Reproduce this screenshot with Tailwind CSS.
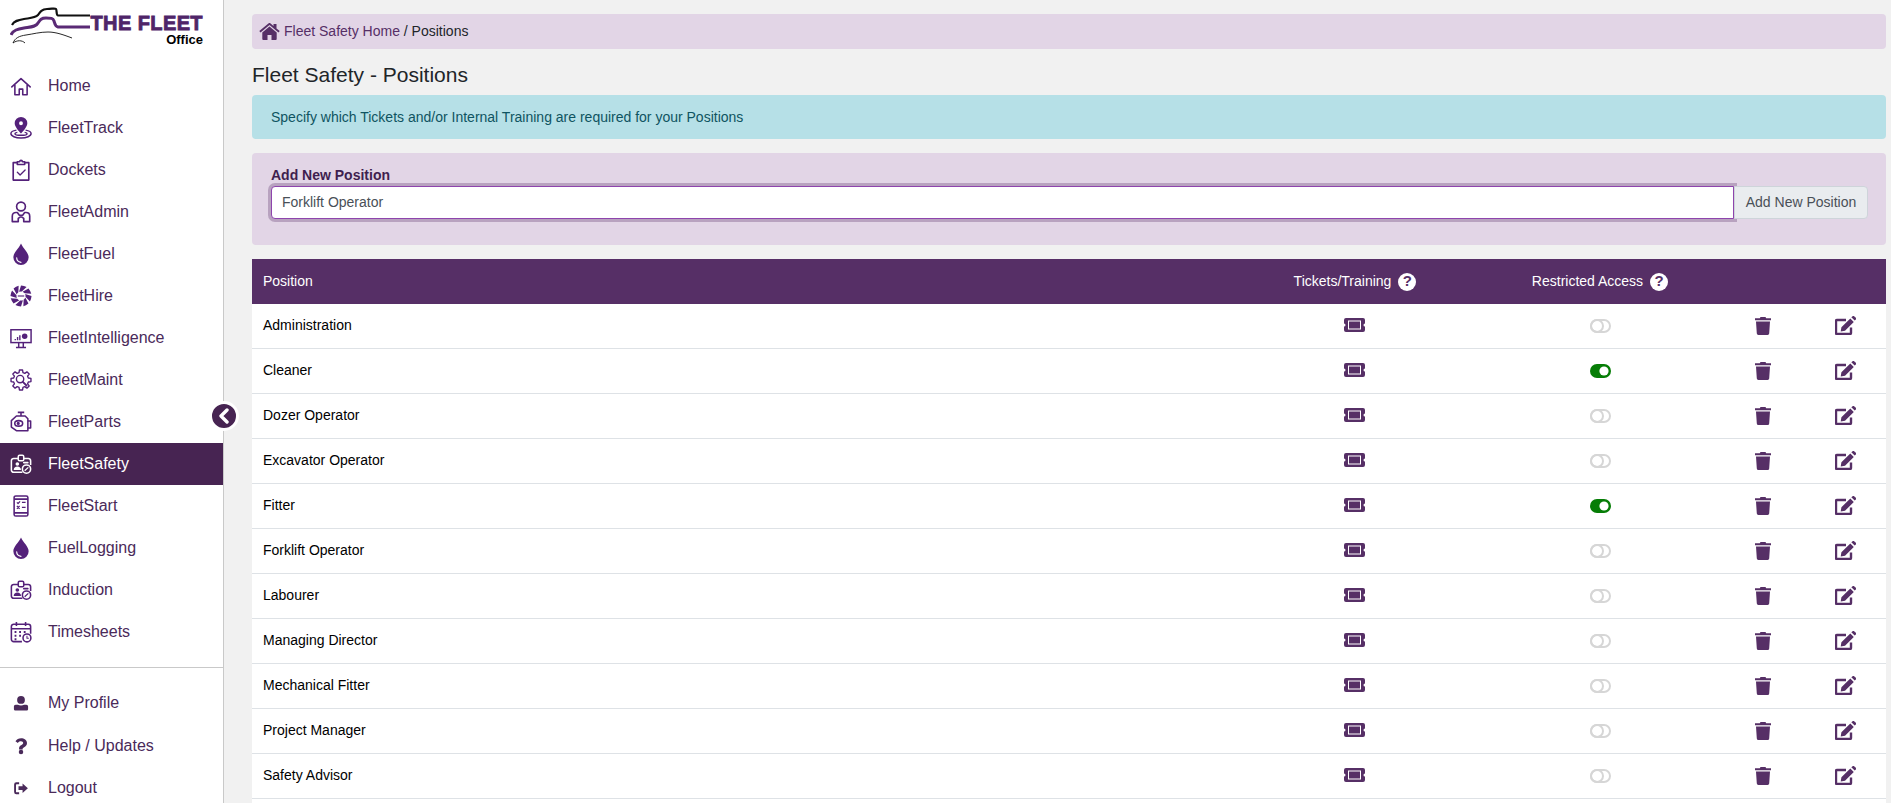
<!DOCTYPE html>
<html lang="en">
<head>
  <meta charset="UTF-8" />
  <title>Fleet Safety - Positions</title>
  <script src="https://cdn.jsdelivr.net/npm/@tailwindcss/browser@4"></script>
</head>
<body class="bg-[#f1f1f1] text-[14px] text-[#212529] font-['Liberation_Sans',Arial,sans-serif] h-screen overflow-hidden">

  <!-- icons -->
  <svg class="hidden">
    <symbol id="i-home" viewBox="0 0 24 24" fill="none" stroke="currentColor" stroke-width="1.800" stroke-linejoin="round" stroke-linecap="round"><path d="M1.500 12.500 12 3l10.500 9.500M5 10.500V21.500h5v-6.500h4v6.500h5V10.500"/></symbol>
    <symbol id="i-track" viewBox="0 0 24 24"><path fill="currentColor" fill-rule="evenodd" d="M12 0a6.900 6.900 0 0 0-6.900 6.900C5.100 11.500 12 18 12 18s6.900-6.500 6.900-11.100A6.900 6.900 0 0 0 12 0zm0 4.700a2.100 2.100 0 1 1 0 4.200 2.100 2.100 0 0 1 0-4.200z"/><g fill="none" stroke="currentColor" stroke-width="1.600"><path d="M7 14.300C3.200 15 1 16.400 1 18c0 2.800 4.900 5 11 5s11-2.200 11-5c0-1.600-2.200-3-6-3.700"/><path d="M8 16.800c-1.600.3-2.600.8-2.600 1.400 0 1 3 1.800 6.600 1.800s6.600-.8 6.600-1.800c0-.6-1-1.100-2.600-1.400"/></g></symbol>
    <symbol id="i-dockets" viewBox="0 0 24 24" fill="none" stroke="currentColor" stroke-width="1.800" stroke-linejoin="round" stroke-linecap="round"><path d="M8 4H3.500v19h17V4H16"/><path d="M8 6V3h2.500a1.500 1.500 0 0 1 3 0H16v3z"/><path d="m8 14.500 3 3 5.500-5.500" stroke-width="1.400"/></symbol>
    <symbol id="i-admin" viewBox="0 0 24 24" fill="none" stroke="currentColor" stroke-width="1.800" stroke-linejoin="round"><circle cx="12" cy="6" r="4.800"/><path d="M8 12.500H6.500C4.300 12.500 2.500 14 2.500 16.500v6h6.500v-3.500l2-1.500h2l2 1.500v3.500h6.500v-6c0-2.500-1.800-4-4-4H16l-2.200 3h-3.600z"/></symbol>
    <symbol id="i-fuel" viewBox="3.500 1 17 23"><path fill="currentColor" d="M12 1.500C9.500 7 4 11 4 16a8 8 0 0 0 16 0c0-5-5.500-9-8-14.500z"/><path fill="none" stroke="#fff" stroke-width="1.200" stroke-linecap="round" d="M7.500 16.500c0 2.500 2 4.500 4.500 4.700"/></symbol>
    <symbol id="i-hire" viewBox="0 0 24 24"><g fill="currentColor">
      <path id="blade" d="M12 .5Q15.500.8 18.100 2.250L12.870 7.080Q11.300 6.900 9.900 7.470z"/>
      <use href="#blade" transform="rotate(45 12 12)"/><use href="#blade" transform="rotate(90 12 12)"/><use href="#blade" transform="rotate(135 12 12)"/><use href="#blade" transform="rotate(180 12 12)"/><use href="#blade" transform="rotate(225 12 12)"/><use href="#blade" transform="rotate(270 12 12)"/><use href="#blade" transform="rotate(315 12 12)"/>
      <rect x="8.500" y="11" width="7" height="2" opacity=".6"/></g></symbol>
    <symbol id="i-intel" viewBox="0 0 24 24"><rect x="1" y="3" width="22" height="14" fill="none" stroke="currentColor" stroke-width="1.600"/><path fill="currentColor" d="M5 13h1.500v1.500H5zM7.500 11H9v3.500H7.500zM10 9h1.500v5.500H10z"/><circle cx="16" cy="10" r="3" fill="currentColor"/><path fill="none" stroke="currentColor" stroke-width="1.600" d="M9.500 17v5M14.500 17v5M6.500 22.300h11"/></symbol>
    <symbol id="i-maint" viewBox="0 0 24 24" fill="none" stroke="currentColor" stroke-width="1.500" stroke-linejoin="round"><polygon transform="translate(12 12)" points="8.020,-2.150 10.860,-1.720 10.860,1.720 8.020,2.150 7.190,4.150 8.900,6.460 6.460,8.900 4.150,7.190 2.150,8.020 1.720,10.860 -1.720,10.860 -2.150,8.020 -4.150,7.190 -6.460,8.900 -8.900,6.460 -7.190,4.150 -8.020,2.150 -10.860,1.720 -10.860,-1.720 -8.020,-2.150 -7.190,-4.150 -8.900,-6.460 -6.460,-8.900 -4.150,-7.190 -2.150,-8.020 -1.720,-10.860 1.720,-10.860 2.150,-8.020 4.150,-7.190 6.460,-8.900 8.900,-6.460 7.190,-4.150"/><circle cx="11" cy="11" r="4"/><path stroke-width="2" stroke-linecap="round" d="m14 14 4 4"/></symbol>
    <symbol id="i-parts" viewBox="0 0 24 24" fill="none" stroke="currentColor" stroke-width="1.700" stroke-linejoin="round"><path d="M8.500 1.500h7M12 1.500v4"/><path d="M7 5.500h9.500l3 3v13H7L1.500 17.500V10.500z"/><ellipse cx="9.500" cy="13.500" rx="4.300" ry="3"/><circle cx="9" cy="13.500" r=".9" fill="currentColor"/><path d="M19.500 11h3v7.500h-3"/></symbol>
    <symbol id="i-badge" viewBox="0 0 24 24" fill="none" stroke="currentColor" stroke-width="1.700" stroke-linejoin="round"><path d="M9 6H4a2.500 2.500 0 0 0-2.500 2.500v10A2.500 2.500 0 0 0 4 21h9.500M22.500 13V8.500A2.500 2.500 0 0 0 20 6h-5"/><rect x="9" y="2.500" width="6" height="6" rx="1.500"/><circle cx="8" cy="12" r="2" fill="currentColor" stroke="none"/><path fill="currentColor" stroke="none" d="M4 18.500c0-2.500 1.700-3.800 4-3.800s4 1.300 4 3.800z"/><path stroke-linecap="round" d="M15 10.500h4.500"/><circle cx="18" cy="17.500" r="4.500"/><path stroke-width="1.400" d="m16 19.300 4-3.600"/></symbol>
    <symbol id="i-start" viewBox="0 0 24 24" fill="none" stroke="currentColor" stroke-width="1.700" stroke-linejoin="round"><rect x="4.500" y="1" width="15" height="22" rx="1.800"/><path d="M4.500 4.500h15M4.500 19.500h15"/><path stroke-width="1.300" d="m7.500 8 1.300 1.300L11 7M13 8h4M7.500 12l3 3M10.500 12l-3 3M13 13.500h4"/></symbol>
    <symbol id="i-time" viewBox="0 0 24 24" fill="none" stroke="currentColor" stroke-width="1.700" stroke-linejoin="round"><path d="M13 22.500H4A2.500 2.500 0 0 1 1.500 20V6A2.500 2.500 0 0 1 4 3.500h16A2.500 2.500 0 0 1 22.500 6v8"/><path d="M1.500 8.500h21M7 1v4.500M17 1v4.500"/><path stroke-width="2.200" d="M5 12h2M10 12h2M15 12h2M5 16h2M10 16h2M5 20h2"/><circle cx="18.500" cy="18.500" r="4.300" fill="#fff"/><path stroke-width="1.100" d="M18.500 16v2.700h2"/></symbol>
    <symbol id="i-user" viewBox="0 0 24 24"><circle cx="12" cy="7" r="5.500" fill="currentColor"/><path fill="currentColor" d="M4.500 13.800h3c1.300.7 2.900 1 4.500 1s3.200-.3 4.500-1h3c1.400 0 2.500 1.100 2.500 2.500V20a2 2 0 0 1-2 2H4a2 2 0 0 1-2-2v-3.700c0-1.400 1.100-2.500 2.500-2.500z"/></symbol>
    <symbol id="i-help" viewBox="0 0 24 24"><path fill="currentColor" d="M12.300 1.500c-3.600 0-5.900 1.500-7.700 4.100l3.200 2.400c1-1.300 2-2.200 4.200-2.200 1.700 0 2.900 1 2.900 2.300 0 1.200-.8 1.900-2.200 2.700-1.800 1-3.300 2.300-3.300 4.700v1h4.800v-.6c0-1.100.6-1.600 2-2.400 2.200-1.200 3.800-2.700 3.800-5.600 0-3.800-3.800-6.400-7.900-6.400z"/><circle cx="12" cy="20" r="3" fill="currentColor"/></symbol>
    <symbol id="i-logout" viewBox="0 0 24 24"><path fill="currentColor" d="M9 5H5a1 1 0 0 0-1 1v11a1 1 0 0 0 1 1h4v3H4.500A3.500 3.500 0 0 1 1 17.500v-12A3.500 3.500 0 0 1 4.500 2H9zM14.500 4l8.500 7.500-8.500 7.500v-4.500H8v-6h6.500z"/></symbol>
    <symbol id="i-ticket" viewBox="0 0 21 14"><path fill="currentColor" fill-rule="evenodd" d="M2 0h17a2 2 0 0 1 2 2v3.500a1.500 1.500 0 0 0 0 3V12a2 2 0 0 1-2 2H2a2 2 0 0 1-2-2V8.500a1.500 1.500 0 0 0 0-3V2a2 2 0 0 1 2-2z"/><rect x="4.500" y="3" width="12" height="8" fill="none" stroke="#fff" stroke-width="1"/></symbol>
    <symbol id="i-off" viewBox="0 0 21 14" fill="none" stroke="#d6d6d6" stroke-width="2"><rect x="1" y="1" width="19" height="12" rx="6"/><circle cx="7" cy="7" r="6"/></symbol>
    <symbol id="i-on" viewBox="0 0 21 14"><rect width="21" height="14" rx="7" fill="#067d06"/><circle cx="14" cy="7" r="4.600" fill="#fff"/></symbol>
    <symbol id="i-trash" viewBox="0 0 16 18"><path fill="currentColor" d="M5.500 0h5l.7 1.300H16v2H0v-2h4.800zM1 4.500h14l-.8 12a1.600 1.600 0 0 1-1.600 1.500H3.400a1.600 1.600 0 0 1-1.600-1.500z"/></symbol>
    <symbol id="i-edit" viewBox="0 0 21 19"><path fill="none" stroke="currentColor" stroke-width="2.400" d="M16 11.500V17a1 1 0 0 1-1 1H2a1 1 0 0 1-1-1V5a1 1 0 0 1 1-1h9"/><path fill="currentColor" d="M15.300 2.500l3.500 3.500L10 14.800l-4.300.7.700-4.200zM16.300 1.300 17.300.4a1.500 1.500 0 0 1 2.100 0l1.200 1.200a1.500 1.500 0 0 1 0 2.100l-.9.900z"/></symbol>
  </svg>

  <div class="flex h-full">
    <!-- Sidebar -->
    <aside class="relative w-[224px] shrink-0 h-full bg-white border-r border-[#c9c9c9] text-[16px] text-[#4a2a5a]">
      <div class="flex h-[65px] pl-[10px] pt-[5px]">
        <svg class="w-[82px] h-[40px] shrink-0" viewBox="10 5 82 40" fill="none">
          <path stroke="#111" stroke-width="2.200" d="M12 25c2-4 6-5 12-6s11-1 14-4c2-3 4-6 9-6s8-1 9 0 0 6 2 6.500h32"/>
          <path stroke="#5a2a75" stroke-width="3" d="M11 35c2-5 7-6 13-7s12-1 14-5c2-3 3-5 8-5s7 0 8 3 1 5.500 4 6h32"/>
          <path stroke="#111" stroke-width=".9" d="M13 43c2-5 6-7 13-8s14-3 22-3 16 3 24 6M13 43c4-3 9-3 12 0"/>
        </svg>
        <div class="w-[111px] pt-[8px] flex flex-col items-end font-bold leading-none">
          <span class="text-[20px] tracking-[0.4px] text-[#4f2568] [-webkit-text-stroke:0.8px_#4f2568] whitespace-nowrap">THE FLEET</span>
          <span class="text-[13px] text-black">Office</span>
        </div>
      </div>

      <nav>
        <a class="flex items-center h-[42px] pl-[10px] gap-[16px]"><svg class="w-[22px] h-[21px] shrink-0 text-[#54217a]"><use href="#i-home"/></svg>Home</a>
        <a class="flex items-center h-[42px] pl-[10px] gap-[16px]"><svg class="w-[22px] h-[22px] shrink-0 text-[#54217a]"><use href="#i-track"/></svg>FleetTrack</a>
        <a class="flex items-center h-[42px] pl-[10px] gap-[16px]"><svg class="w-[22px] h-[22px] shrink-0 text-[#54217a]"><use href="#i-dockets"/></svg>Dockets</a>
        <a class="flex items-center h-[42px] pl-[10px] gap-[16px]"><svg class="w-[22px] h-[22px] shrink-0 text-[#54217a]"><use href="#i-admin"/></svg>FleetAdmin</a>
        <a class="flex items-center h-[42px] pl-[10px] gap-[16px]"><svg class="w-[22px] h-[22px] shrink-0 text-[#54217a]"><use href="#i-fuel"/></svg>FleetFuel</a>
        <a class="flex items-center h-[42px] pl-[10px] gap-[16px]"><svg class="w-[22px] h-[22px] shrink-0 text-[#54217a]"><use href="#i-hire"/></svg>FleetHire</a>
        <a class="flex items-center h-[42px] pl-[10px] gap-[16px]"><svg class="w-[22px] h-[22px] shrink-0 text-[#54217a]"><use href="#i-intel"/></svg>FleetIntelligence</a>
        <a class="flex items-center h-[42px] pl-[10px] gap-[16px]"><svg class="w-[22px] h-[22px] shrink-0 text-[#54217a]"><use href="#i-maint"/></svg>FleetMaint</a>
        <a class="flex items-center h-[42px] pl-[10px] gap-[16px]"><svg class="w-[22px] h-[22px] shrink-0 text-[#54217a]"><use href="#i-parts"/></svg>FleetParts</a>
        <a class="flex items-center h-[42px] pl-[10px] gap-[16px] bg-[#472452] text-white"><svg class="w-[22px] h-[22px] shrink-0"><use href="#i-badge"/></svg>FleetSafety</a>
        <a class="flex items-center h-[42px] pl-[10px] gap-[16px]"><svg class="w-[22px] h-[22px] shrink-0 text-[#54217a]"><use href="#i-start"/></svg>FleetStart</a>
        <a class="flex items-center h-[42px] pl-[10px] gap-[16px]"><svg class="w-[22px] h-[22px] shrink-0 text-[#54217a]"><use href="#i-fuel"/></svg>FuelLogging</a>
        <a class="flex items-center h-[42px] pl-[10px] gap-[16px]"><svg class="w-[22px] h-[22px] shrink-0 text-[#54217a]"><use href="#i-badge"/></svg>Induction</a>
        <a class="flex items-center h-[42px] pl-[10px] gap-[16px]"><svg class="w-[22px] h-[22px] shrink-0 text-[#54217a]"><use href="#i-time"/></svg>Timesheets</a>
      </nav>

      <div class="mt-[14px] mb-[14px] border-t border-[#c9c9c9]"></div>

      <nav>
        <a class="flex items-center h-[42.5px] pl-[10px] gap-[16px]"><svg class="w-[22px] h-[17px] shrink-0"><use href="#i-user"/></svg>My Profile</a>
        <a class="flex items-center h-[42.5px] pl-[10px] gap-[16px]"><svg class="w-[22px] h-[18px] shrink-0"><use href="#i-help"/></svg>Help / Updates</a>
        <a class="flex items-center h-[42.5px] pl-[10px] gap-[16px]"><svg class="w-[22px] h-[15px] shrink-0"><use href="#i-logout"/></svg>Logout</a>
      </nav>

      <!-- collapse button -->
      <button class="absolute left-[209px] top-[401px] w-[30px] h-[30px] rounded-full bg-[#472452] border-[3px] border-white flex items-center justify-center">
        <svg class="w-[12px] h-[16px]" viewBox="0 0 12 16" fill="none" stroke="#fff" stroke-width="3.400" stroke-linecap="round" stroke-linejoin="round"><path d="M9 2 3 8l6 6"/></svg>
      </button>
    </aside>

    <!-- Main -->
    <main class="flex-1 min-w-0 pl-[28px] pr-[5px] pt-[14px]">
      <div class="flex items-center h-[35px] pl-[7px] gap-[4px] bg-[#e2d5e6] rounded-[4px]">
        <svg class="w-[21px] h-[18px] text-[#562f66]" viewBox="0 0 21 18"><path fill="currentColor" d="M10.500 3.500 3.300 9.600V16a1 1 0 0 0 1 1h4.200v-5h4v5h4.200a1 1 0 0 0 1-1V9.600zM20.700 8.100 17.500 5.400V1h-3v1.900L10.500-.4.300 8.100l1.200 1.400 9-7.500 9 7.500z"/></svg>
        <span><a class="text-[#562f66]">Fleet Safety Home</a> / Positions</span>
      </div>

      <h1 class="h-[46px] pt-[5px] flex items-center text-[21px] font-normal">Fleet Safety - Positions</h1>

      <div class="flex items-center h-[44px] pl-[19px] bg-[#b6e0e7] text-[#0f5461] rounded-[4px]">Specify which Tickets and/or Internal Training are required for your Positions</div>

      <form class="mt-[14px] h-[92px] pt-[12px] pl-[19px] pr-[18px] bg-[#e2d5e6] rounded-[4px]">
        <label class="block h-[21px] leading-[21px] font-bold text-[#3f1f4f]">Add New Position</label>
        <div class="flex">
          <input value="Forklift Operator" class="flex-1 h-[33px] pl-[10px] pb-[1px] bg-white text-[#495057] border border-[#8e44ad] rounded-l-[4px] outline-none shadow-[0_0_0_3px_rgba(86,47,102,0.3)]" />
          <button type="button" class="w-[134px] h-[33px] bg-[#e9ecef] text-[#495057] border border-[#ced4da] rounded-r-[4px]">Add New Position</button>
        </div>
      </form>

      <div class="mt-[14px]">
        <div class="grid grid-cols-[1fr_250px_240px_86px_80px] items-center h-[45px] bg-[#562f66] text-white">
          <div class="pl-[11px]">Position</div>
          <div class="flex items-center justify-center gap-[7px]">Tickets/Training <span class="flex items-center justify-center w-[18px] h-[18px] rounded-full bg-white text-[#562f66] text-[15px] font-bold">?</span></div>
          <div class="flex items-center justify-center gap-[7px]">Restricted Access <span class="flex items-center justify-center w-[18px] h-[18px] rounded-full bg-white text-[#562f66] text-[15px] font-bold">?</span></div>
          <div></div>
          <div></div>
        </div>
        <div id="rows"></div>
        <div class="h-[45px] bg-white"></div>
      </div>
    </main>
  </div>

  <script>
    // on = restricted access enabled
    const positions = [
      ['Administration', false], ['Cleaner', true], ['Dozer Operator', false],
      ['Excavator Operator', false], ['Fitter', true], ['Forklift Operator', false],
      ['Labourer', false], ['Managing Director', false], ['Mechanical Fitter', false],
      ['Project Manager', false], ['Safety Advisor', false]
    ];
    document.getElementById('rows').innerHTML = positions.map(([name, on]) => `
      <div class="grid grid-cols-[1fr_250px_240px_86px_80px] items-center h-[45px] bg-white border-b border-[#dee2e6] text-black">
        <div class="pl-[11px] -mt-[1px]">${name}</div>
        <div class="flex justify-center -mt-[2px] pr-[1px] text-[#562f66]"><svg class="w-[21px] h-[14px]"><use href="#i-ticket"/></svg></div>
        <div class="flex justify-center"><svg class="w-[21px] h-[14px]"><use href="#${on ? 'i-on' : 'i-off'}"/></svg></div>
        <div class="flex justify-center text-[#562f66]"><svg class="w-[16px] h-[18px]"><use href="#i-trash"/></svg></div>
        <div class="flex justify-center -mt-[1px] pr-[2px] text-[#562f66]"><svg class="w-[21px] h-[19px]"><use href="#i-edit"/></svg></div>
      </div>`).join('');
  </script>
</body>
</html>
